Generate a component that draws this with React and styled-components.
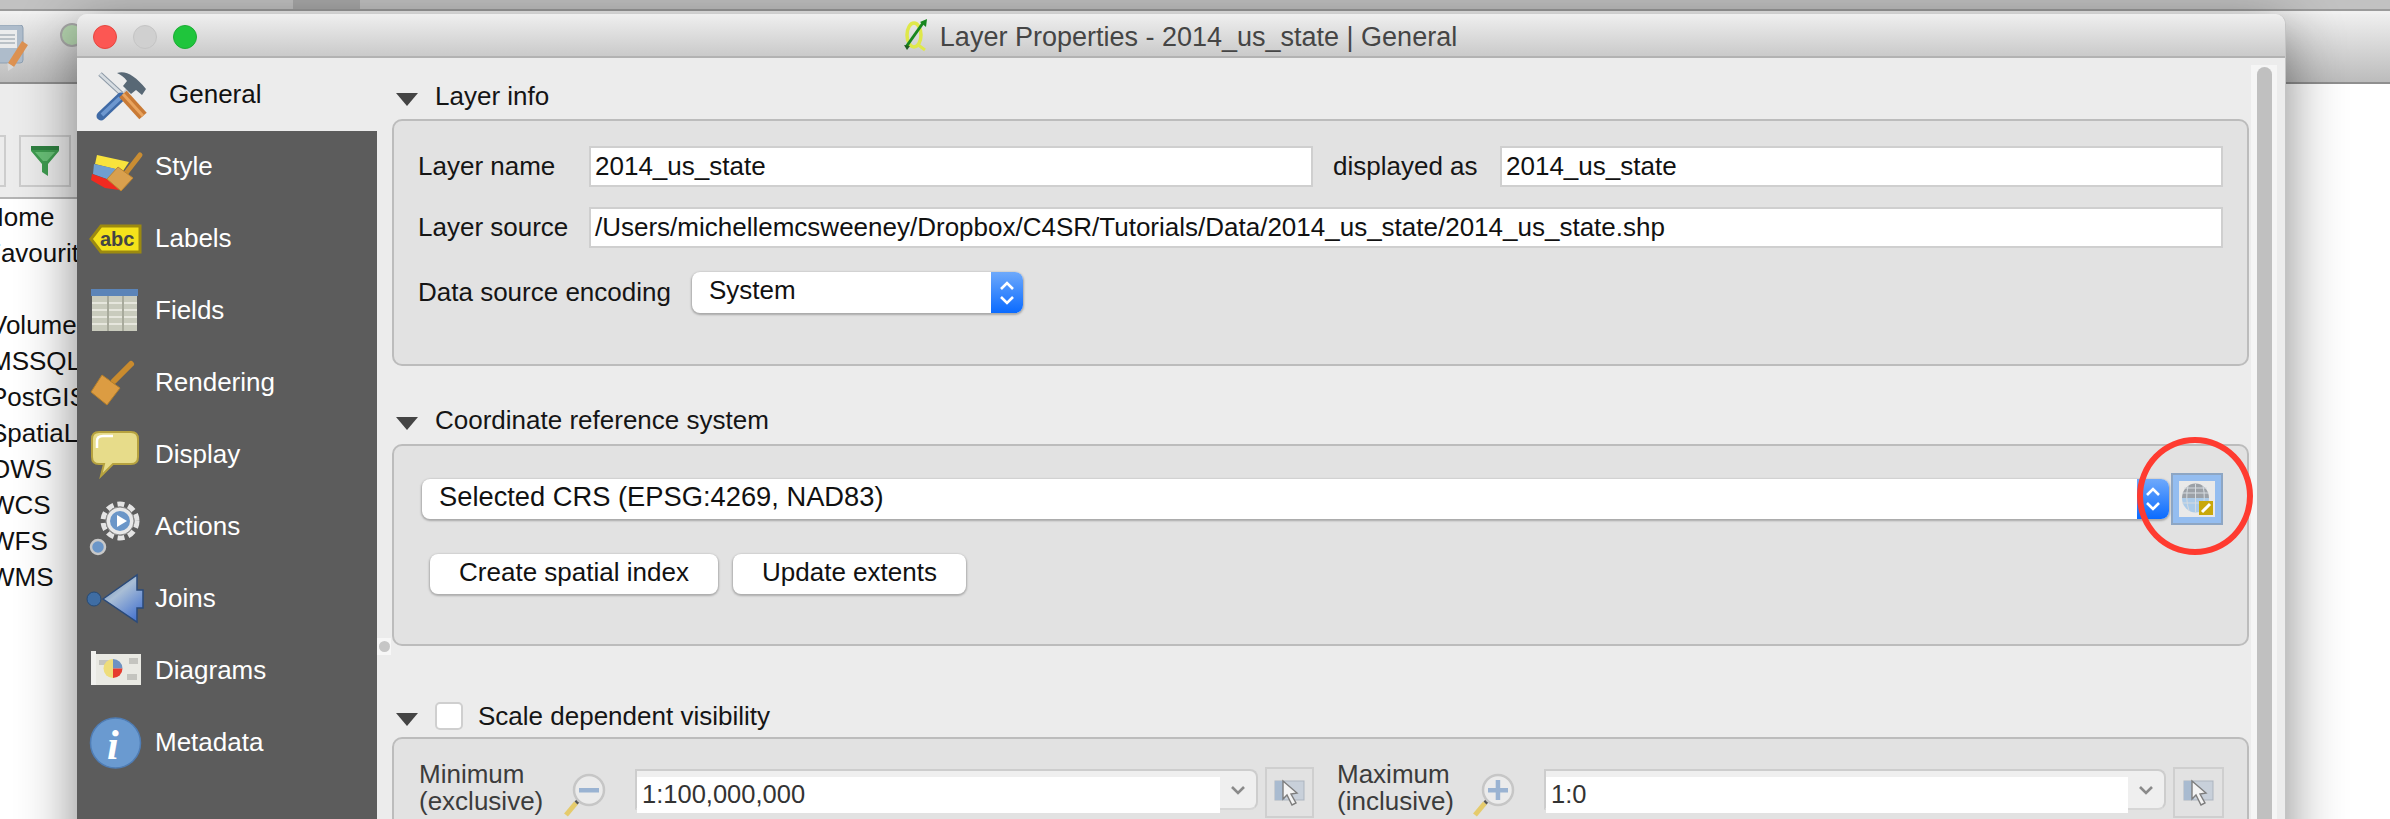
import React from "react";
import styled, { createGlobalStyle } from "styled-components";

const Global = createGlobalStyle`
  html, body { margin: 0; padding: 0; background: #fff; }
  * { box-sizing: border-box; }
  body { font-family: "Liberation Sans", Arial, sans-serif; font-size: 26px; color: #111; }
`;

const Page = styled.div`
  position: relative;
  width: 2390px;
  height: 819px;
  overflow: hidden;
  background: #fff;
`;

/* ---------- main application behind the dialog ---------- */
const TopStrip = styled.div`
  height: 11px;
  background: #c2c2c2;
  border-bottom: 2px solid #9b9b9b;
  padding-left: 293px;
`;
const TopSegment = styled.div`
  width: 67px;
  height: 9px;
  background: #a9a9a9;
`;
const WhiteGap = styled.div`
  height: 3px;
  background: #f1f1f1;
`;
const MainToolbar = styled.div`
  height: 70px;
  background: linear-gradient(#efefef, #bcbcbc);
  border-bottom: 2px solid #8f8f8f;
  display: flex;
  align-items: flex-start;
  padding-top: 9px;
  gap: 32px;
`;
const GreenDot = styled.div`
  width: 24px;
  height: 24px;
  border-radius: 50%;
  background: #b6d6b0;
  border: 2px solid #a9a9a9;
  flex: none;
`;
const BrowserPanel = styled.div`
  width: 300px;
`;
const PanelHead = styled.div`
  height: 50px;
  background: #ececec;
`;
const BrowserTools = styled.div`
  height: 65px;
  background: #ececec;
  border-bottom: 2px solid #b4b4b4;
  display: flex;
  gap: 13px;
  margin-left: -46px;
  padding-top: 1px;
`;
const ToolSquare = styled.div`
  width: 52px;
  height: 52px;
  border: 2px solid #cdcdcd;
  display: flex;
  align-items: center;
  justify-content: center;
`;
const BrowserList = styled.div`
  margin-left: -10px;
`;
const BrowserItem = styled.div`
  height: 36px;
  line-height: 36px;
  margin-left: ${(p) => (p.$far ? "-5px" : "0")};
  margin-bottom: ${(p) => (p.$spaced ? "36px" : "0")};
  color: #111;
  white-space: nowrap;
`;

/* ---------- dialog ---------- */
const Dialog = styled.div`
  position: absolute;
  left: 77px;
  top: 14px;
  width: 2209px;
  height: 860px;
  background: #ececec;
  border-radius: 10px 10px 0 0;
  box-shadow: 0 14px 58px rgba(0, 0, 0, 0.48);
  border-right: 1px solid #c4c4c4;
  display: flex;
  flex-direction: column;
`;
const TitleBar = styled.div`
  position: relative;
  height: 44px;
  flex: none;
  background: linear-gradient(#efefef, #cacaca);
  border-bottom: 2px solid #b2b2b2;
  border-radius: 10px 10px 0 0;
  display: flex;
  align-items: center;
  justify-content: center;
  gap: 12px;
  color: #454545;
  font-size: 27px;
  padding-right: 2px;
`;
const TitleText = styled.span`
  margin-top: 4px;
`;
const Lights = styled.div`
  position: absolute;
  left: 16px;
  top: 11px;
  display: flex;
  gap: 16px;
`;
const Light = styled.div`
  width: 24px;
  height: 24px;
  border-radius: 50%;
  background: ${(p) => p.$c};
  border: 1px solid ${(p) => p.$b};
`;
const DialogBody = styled.div`
  flex: 1;
  display: flex;
  min-height: 0;
`;
const Sidebar = styled.div`
  width: 300px;
  flex: none;
  display: flex;
  flex-direction: column;
`;
const SideActive = styled.div`
  height: 73px;
  flex: none;
  background: #ececec;
`;
const SideDark = styled.div`
  flex: 1;
  background: #5c5c5c;
`;
const SideItem = styled.div`
  height: ${(p) => (p.$active ? "73px" : "72px")};
  display: flex;
  align-items: center;
  padding-left: ${(p) => (p.$active ? "20px" : "10px")};
  gap: ${(p) => (p.$active ? "14px" : "10px")};
  color: ${(p) => (p.$active ? "#111" : "#fff")};
  svg { flex: none; overflow: visible; }
`;
const SideLabel = styled.span`
  margin-top: ${(p) => (p.$active ? "0" : "-2px")};
`;

/* ---------- content ---------- */
const Content = styled.div`
  position: relative;
  flex: 1;
  display: flex;
  background: #ececec;
  padding-left: 15px;
`;
const Splitter = styled.div`
  position: absolute;
  left: 0;
  top: 580px;
  width: 14px;
  height: 17px;
  background: #f7f7f7;
  display: flex;
  align-items: center;
  justify-content: center;
  &::after {
    content: "";
    width: 11px;
    height: 11px;
    border-radius: 50%;
    background: #c6c6c6;
  }
`;
const Sections = styled.div`
  width: 1857px;
  flex: none;
  padding-top: 23px;
`;
const SectionHead = styled.div`
  height: 30px;
  display: flex;
  align-items: center;
  padding-left: 4px;
  margin-top: ${(p) => p.$top || 0}px;
  margin-bottom: ${(p) => p.$bottom || 0}px;
  color: #151515;
`;
const Triangle = styled.div`
  width: 0;
  height: 0;
  flex: none;
  margin-top: 6px;
  margin-right: 17px;
  border-left: 11px solid transparent;
  border-right: 11px solid transparent;
  border-top: 13px solid #444;
`;
const Check = styled.div`
  width: 28px;
  height: 28px;
  flex: none;
  margin-right: 15px;
  background: #fff;
  border: 2px solid #cfcfcf;
  border-radius: 5px;
`;
const Group = styled.div`
  position: relative;
  height: ${(p) => p.$h}px;
  background: #e2e2e2;
  border: 2px solid #bcbcbc;
  border-radius: 10px;
`;
const InfoGrid = styled.div`
  display: grid;
  grid-template-columns: 171px 724px 187px 723px;
  grid-auto-rows: 41px;
  row-gap: 20px;
  align-items: center;
  padding: 25px 0 0 24px;
`;
const Label = styled.span`
  color: #151515;
  white-space: nowrap;
  padding-left: ${(p) => p.$pad || 0}px;
`;
const Field = styled.div`
  height: 41px;
  background: #fff;
  border: 2px solid #cfcfcf;
  padding-left: 4px;
  line-height: 37px;
  white-space: nowrap;
  grid-column: ${(p) => (p.$wide ? "2 / 5" : "auto")};
`;
const EncodingRow = styled.div`
  display: flex;
  align-items: center;
  padding: 24px 0 0 24px;
`;
const Combo = styled.div`
  height: ${(p) => p.$h || 41}px;
  width: ${(p) => p.$w}px;
  margin-left: ${(p) => p.$left || 0}px;
  flex: none;
  display: flex;
  background: #fff;
  border-radius: 8px;
  box-shadow: 0 1px 2px 1px #a9a9a9;
  overflow: hidden;
`;
const ComboText = styled.div`
  flex: 1;
  padding-left: ${(p) => p.$pad}px;
  font-size: ${(p) => p.$size || 26}px;
  line-height: ${(p) => p.$line || 37}px;
  white-space: nowrap;
`;
const Stepper = styled.div`
  width: ${(p) => p.$w}px;
  flex: none;
  background: linear-gradient(#6ea9fb, #0a6bff);
  display: flex;
  align-items: center;
  justify-content: center;
`;
const CrsRow = styled.div`
  display: flex;
  align-items: center;
  padding: 27px 0 0 28px;
  gap: 2px;
`;
const CrsButton = styled.div`
  width: 52px;
  height: 52px;
  flex: none;
  background: #94bdf0;
  border: 2px solid #8da6c4;
  display: flex;
  align-items: center;
  justify-content: center;
`;
const CrsIconFace = styled.div`
  width: 36px;
  height: 36px;
  background: #e9e9e9;
`;
const ButtonRow = styled.div`
  display: flex;
  gap: 15px;
  padding: 29px 0 0 36px;
`;
const PushButton = styled.div`
  width: ${(p) => p.$w}px;
  height: 40px;
  padding-bottom: 3px;
  background: #fff;
  border-radius: 8px;
  box-shadow: 0 1px 2px 1px #adadad;
  display: flex;
  align-items: center;
  justify-content: center;
  color: #111;
`;
const RedRing = styled.div`
  position: absolute;
  left: 1743px;
  top: -9px;
  width: 116px;
  height: 118px;
  border: 6px solid #ff3b30;
  border-radius: 50%;
`;
const ScaleRow = styled.div`
  display: flex;
  align-items: flex-start;
  padding: 28px 0 0 25px;
`;
const ScaleSide = styled.div`
  width: ${(p) => p.$w}px;
  padding-right: ${(p) => p.$right || 0}px;
  flex: none;
  display: flex;
  align-items: flex-start;
`;
const ScaleLabel = styled.div`
  width: ${(p) => p.$w}px;
  flex: none;
  line-height: 27px;
  margin-top: -6px;
  color: #3c3c3c;
`;
const MagnifierSlot = styled.div`
  width: 74px;
  flex: none;
  margin-top: 6px;
`;
const ScaleCombo = styled.div`
  flex: 1;
  height: 41px;
  margin-top: 2px;
  display: flex;
  background: #efefef;
  border: 2px solid #cdcdcd;
  border-bottom-color: #d6d6d6;
  border-radius: 0 8px 8px 0;
`;
const ScaleField = styled.div`
  flex: 1;
  height: 36px;
  margin-top: 6px;
  background: #fff;
  padding-left: 5px;
  font-size: 25.5px;
  line-height: 34px;
  color: #333;
`;
const Chevron = styled.div`
  width: 36px;
  flex: none;
  display: flex;
  align-items: center;
  justify-content: center;
`;
const MapButton = styled.div`
  width: ${(p) => p.$w}px;
  height: 51px;
  margin-left: 7px;
  flex: none;
  border: 2px solid #cfcfcf;
  display: flex;
  align-items: center;
  justify-content: center;
`;
const ScrollTrack = styled.div`
  width: 26px;
  flex: none;
  margin: 7px 0 0 2px;
  background: #f5f5f5;
  padding: 2px 5px 0 6px;
`;
const ScrollThumb = styled.div`
  height: 100%;
  background: #c0c0c0;
  border-radius: 8px 8px 0 0;
`;

/* ---------- icons ---------- */
const Ic = ({ children }) => (
  <svg width="58" height="58" viewBox="0 0 58 58">{children}</svg>
);

const GeneralIcon = () => (
  <Ic>
    <line x1="3" y1="8" x2="27" y2="30" stroke="#8b98a5" strokeWidth="5" />
    <line x1="3" y1="8" x2="27" y2="30" stroke="#d7dde2" strokeWidth="3" />
    <line x1="24" y1="32" x2="35" y2="20" stroke="#c9ced3" strokeWidth="5" />
    <line x1="4" y1="50" x2="24" y2="31" stroke="#3f6aa6" strokeWidth="9" strokeLinecap="round" />
    <line x1="5" y1="49" x2="23" y2="32" stroke="#6d97cf" strokeWidth="4" />
    <line x1="26" y1="28" x2="46" y2="50" stroke="#c97a35" strokeWidth="10" />
    <line x1="26" y1="28" x2="46" y2="50" stroke="#e9a45f" strokeWidth="3" />
    <path d="M20 7 C28 4 38 9 49 23 L45 29 L39 24 L34 28 L26 20 L30 15 C27 11 24 9 20 7Z" fill="#586875" />
  </Ic>
);
const StyleIcon = () => (
  <Ic>
    <path d="M10 17 L42 24 L36 33 L8 26Z" fill="#f8e33c" />
    <path d="M7 26 L34 32 L28 44 L6 36Z" fill="#6f9fd0" />
    <path d="M5 36 L28 44 L32 52 L18 50 L4 42Z" fill="#f02a20" />
    <line x1="39" y1="35" x2="53" y2="17" stroke="#c98d33" strokeWidth="5" strokeLinecap="round" />
    <path d="M31 29 L46 40 L34 53 L20 41Z" fill="#d9a04e" stroke="#bd8530" />
  </Ic>
);
const LabelsIcon = () => (
  <Ic>
    <path d="M4 29 L14 16 H53 V42 H14Z" fill="#f4e21b" stroke="#9c8a10" strokeWidth="3" />
    <text x="13" y="36" fontFamily="Liberation Sans" fontWeight="700" fontSize="20" fill="#444">abc</text>
  </Ic>
);
const FieldsIcon = () => (
  <Ic>
    <rect x="5" y="14" width="45" height="35" fill="#c9cbbd" />
    <rect x="4" y="7" width="47" height="7" fill="#5b84b8" />
    <rect x="5" y="20" width="45" height="2" fill="#e6e6dd" />
    <rect x="5" y="27" width="45" height="2" fill="#e6e6dd" />
    <rect x="5" y="34" width="45" height="2" fill="#e6e6dd" />
    <rect x="5" y="41" width="45" height="2" fill="#e6e6dd" />
    <rect x="20" y="14" width="2" height="35" fill="#a8aa9c" />
    <rect x="35" y="14" width="2" height="35" fill="#a8aa9c" />
  </Ic>
);
const RenderingIcon = () => (
  <Ic>
    <line x1="27" y1="27" x2="44" y2="10" stroke="#c98b2e" strokeWidth="6" strokeLinecap="round" />
    <path d="M15 21 L33 34 L20 51 L4 38Z" fill="#dc9c42" stroke="#b57f2a" />
  </Ic>
);
const DisplayIcon = () => (
  <Ic>
    <path d="M12 6 H44 Q51 6 51 13 V31 Q51 38 44 38 H26 L14 50 L17 38 H12 Q5 38 5 31 V13 Q5 6 12 6Z" fill="#e7dc8a" stroke="#b6a23f" strokeWidth="2" />
    <path d="M10 22 V15 Q10 10 16 10 H26" fill="none" stroke="#fff" strokeWidth="2.5" />
  </Ic>
);
const ActionsIcon = () => (
  <Ic>
    <circle cx="33" cy="23" r="17" fill="none" stroke="#e4e4e4" strokeWidth="5" strokeDasharray="7 4" />
    <circle cx="33" cy="23" r="14" fill="#e8e8e8" stroke="#8a8a8a" strokeWidth="1" />
    <circle cx="33" cy="23" r="10" fill="#6b96c8" />
    <path d="M30 17 L40 23 L30 29Z" fill="#fff" />
    <circle cx="11" cy="49" r="7" fill="#6b96c8" stroke="#c8c8c8" strokeWidth="2.5" />
  </Ic>
);
const JoinsIcon = () => (
  <Ic>
    <defs>
      <linearGradient id="jg" x1="0" y1="0" x2="0.7" y2="1">
        <stop offset="0" stopColor="#5b7ea8" />
        <stop offset="0.45" stopColor="#a9bed6" />
        <stop offset="1" stopColor="#4c78d0" />
      </linearGradient>
    </defs>
    <circle cx="7" cy="29" r="7" fill="#3f6da3" stroke="#264a75" />
    <path d="M16 29 L50 5 L50 20 L56 20 L56 38 L50 38 L50 52Z" fill="url(#jg)" stroke="#2a4a7a" strokeWidth="1.5" />
  </Ic>
);
const DiagramsIcon = () => (
  <Ic>
    <rect x="8" y="12" width="46" height="31" fill="#e9e9e3" />
    <rect x="4" y="9" width="5" height="34" fill="#f1f1ee" />
    <path d="M12 18 h10 v5 h-10z M42 16 h9 v6 h-9z M40 32 h10 v6 h-10z" fill="#c4c4bf" />
    <path d="M26 17 A9.5 9.5 0 0 0 26 36Z" fill="#eedd7a" />
    <path d="M26 17 A9.5 9.5 0 0 1 35.5 26.5 L26 26.5Z" fill="#6d92c2" />
    <path d="M26 26.5 H35.5 A9.5 9.5 0 0 1 26 36Z" fill="#e63c2e" />
  </Ic>
);
const MetadataIcon = () => (
  <Ic>
    <circle cx="28.5" cy="29" r="25" fill="#6a9ad0" stroke="#4f7db5" strokeWidth="1.5" />
    <text x="20" y="45" fontFamily="Liberation Serif" fontStyle="italic" fontWeight="700" fontSize="42" fill="#fff">i</text>
  </Ic>
);

const Qgis = () => (
  <svg width="25" height="34" viewBox="0 0 25 34">
    <ellipse cx="11" cy="17" rx="7" ry="12" fill="none" stroke="#dfe84a" strokeWidth="3.5" />
    <path d="M14 26 L22 32" stroke="#dfe84a" strokeWidth="3" />
    <path d="M3 29 L20 5" stroke="#18871f" strokeWidth="3" />
    <path d="M17 4 L24 1 L23 9Z" fill="#18871f" />
    <path d="M1 27 L7 28 L4 32Z" fill="#1d5c22" />
  </svg>
);
const Updown = ({ s = 1 }) => (
  <svg width={20 * s} height={30 * s} viewBox="0 0 20 30" fill="none" stroke="#fff" strokeWidth="2.6">
    <path d="M4 11 L10 5 L16 11" />
    <path d="M4 19 L10 25 L16 19" />
  </svg>
);
const CrsGlobe = () => (
  <svg width="36" height="36" viewBox="0 0 36 36">
    <path d="M3 17 A13 14 0 0 1 30 17Z" fill="#9ca1a7" />
    <path d="M3 17 A13 14 0 0 0 30 17Z" fill="#abcbe9" />
    <path d="M3 12 H30 M5 7 H28 M3 22 H30 M16.5 3 V31 M9 5 Q6 17 10 30 M24 5 Q27 17 23 30" fill="none" stroke="#d6dbe0" strokeWidth="1" />
    <rect x="20" y="20" width="14" height="14" fill="#c9a80b" />
    <path d="M23 31 L31 23" stroke="#fff" strokeWidth="3" />
  </svg>
);
const Magnifier = ({ plus }) => (
  <svg width="45" height="45" viewBox="0 0 45 45" style={{ display: "block" }}>
    <line x1="5" y1="42" x2="15" y2="30" stroke="#e5cb6c" strokeWidth="5" />
    <line x1="15" y1="30" x2="19" y2="26" stroke="#555" strokeWidth="4" />
    <circle cx="28" cy="17" r="15" fill="#ebebeb" stroke="#c6c6c6" strokeWidth="2.5" />
    <rect x="18" y="15" width="20" height="4.5" fill="#9ab3d2" />
    {plus && <rect x="25.7" y="7" width="4.5" height="20" fill="#9ab3d2" />}
  </svg>
);
const MapCursor = () => (
  <svg width="32" height="30" viewBox="0 0 32 30">
    <rect x="1" y="3" width="29" height="19" fill="#c8d0da" stroke="#adb5bf" />
    <rect x="1" y="3" width="10" height="19" fill="#a9bbd0" />
    <path d="M9 3 L9 21 L13 17 L18 27 L22 25 L17 16 L23 15Z" fill="#f4f4f4" stroke="#7d7d7d" strokeWidth="1.4" />
  </svg>
);
const Down = () => (
  <svg width="16" height="10" viewBox="0 0 16 10" fill="none" stroke="#8a8a8a" strokeWidth="2.6">
    <path d="M2 2 L8 8 L14 2" />
  </svg>
);
const SaveEdit = () => (
  <svg width="28" height="46" viewBox="0 0 28 46" style={{ flex: "none", marginTop: 2 }}>
    <rect x="-16" y="0" width="39" height="38" rx="3" fill="#aebccb" stroke="#8ea0b2" />
    <rect x="-12" y="5" width="29" height="18" fill="#ebeced" />
    <path d="M-12 10 H15 M-12 14 H15 M-12 18 H15" stroke="#aab3bb" strokeWidth="1.5" />
    <line x1="25" y1="18" x2="11" y2="40" stroke="#dd9252" strokeWidth="7" />
    <path d="M7.5 38 L14 42 L8 46Z" fill="#d8d8d8" />
  </svg>
);
const Funnel = () => (
  <svg width="30" height="32" viewBox="0 0 30 32">
    <path d="M1 1 H29 V6 L18 19 V31 L12 27 V19 L1 6Z" fill="#3f9c50" />
    <path d="M1 1 H29 V5 H1Z" fill="#2f8041" />
    <path d="M5 7 H25 L17 16 H13Z" fill="#69c077" />
  </svg>
);

const NAV = [
  ["Style", StyleIcon],
  ["Labels", LabelsIcon],
  ["Fields", FieldsIcon],
  ["Rendering", RenderingIcon],
  ["Display", DisplayIcon],
  ["Actions", ActionsIcon],
  ["Joins", JoinsIcon],
  ["Diagrams", DiagramsIcon],
  ["Metadata", MetadataIcon],
];
const BROWSER = ["Home", "Favourites", "Volumes", "MSSQL", "PostGIS", "SpatiaLite", "OWS", "WCS", "WFS", "WMS"];

export default function App() {
  return (
    <Page>
      <Global />
      <TopStrip><TopSegment /></TopStrip>
      <WhiteGap />
      <MainToolbar>
        <SaveEdit />
        <GreenDot />
      </MainToolbar>
      <BrowserPanel>
        <PanelHead />
        <BrowserTools>
          <ToolSquare />
          <ToolSquare><Funnel /></ToolSquare>
        </BrowserTools>
        <BrowserList>
          {BROWSER.map((b) => (
            <BrowserItem
              key={b}
              $far={b === "Home" || b === "Favourites"}
              $spaced={b === "Favourites"}
            >
              {b}
            </BrowserItem>
          ))}
        </BrowserList>
      </BrowserPanel>

      <Dialog>
        <TitleBar>
          <Lights>
            <Light $c="#fc5753" $b="#e5463f" />
            <Light $c="#d0d0d0" $b="#c4c4c4" />
            <Light $c="#1fc53c" $b="#1cad34" />
          </Lights>
          <Qgis />
          <TitleText>Layer Properties - 2014_us_state | General</TitleText>
        </TitleBar>
        <DialogBody>
          <Sidebar>
            <SideActive>
              <SideItem $active><GeneralIcon /><SideLabel $active>General</SideLabel></SideItem>
            </SideActive>
            <SideDark>
              {NAV.map(([name, Icon]) => (
                <SideItem key={name}><Icon /><SideLabel>{name}</SideLabel></SideItem>
              ))}
            </SideDark>
          </Sidebar>
          <Content>
            <Splitter />
            <Sections>
              <SectionHead $bottom={8}><Triangle />Layer info</SectionHead>
              <Group $h={247}>
                <InfoGrid>
                  <Label>Layer name</Label>
                  <Field>2014_us_state</Field>
                  <Label $pad={20}>displayed as</Label>
                  <Field>2014_us_state</Field>
                  <Label>Layer source</Label>
                  <Field $wide>/Users/michellemcsweeney/Dropbox/C4SR/Tutorials/Data/2014_us_state/2014_us_state.shp</Field>
                </InfoGrid>
                <EncodingRow>
                  <Label>Data source encoding</Label>
                  <Combo $w={331} $left={21}>
                    <ComboText $pad={17}>System</ComboText>
                    <Stepper $w={32}><Updown /></Stepper>
                  </Combo>
                </EncodingRow>
              </Group>

              <SectionHead $top={39} $bottom={9}><Triangle />Coordinate reference system</SectionHead>
              <Group $h={202}>
                <CrsRow>
                  <Combo $w={1747} $h={40}>
                    <ComboText $pad={17} $size={27.3} $line={35}>Selected CRS (EPSG:4269, NAD83)</ComboText>
                    <Stepper $w={32}><Updown /></Stepper>
                  </Combo>
                  <CrsButton>
                    <CrsIconFace><CrsGlobe /></CrsIconFace>
                  </CrsButton>
                </CrsRow>
                <ButtonRow>
                  <PushButton $w={288}>Create spatial index</PushButton>
                  <PushButton $w={233}>Update extents</PushButton>
                </ButtonRow>
                <RedRing />
              </Group>

              <SectionHead $top={55} $bottom={6}><Triangle /><Check />Scale dependent visibility</SectionHead>
              <Group $h={120}>
                <ScaleRow>
                  <ScaleSide $w={918} $right={23}>
                    <ScaleLabel $w={142}>Minimum<br />(exclusive)</ScaleLabel>
                    <MagnifierSlot><Magnifier /></MagnifierSlot>
                    <ScaleCombo>
                      <ScaleField>1:100,000,000</ScaleField>
                      <Chevron><Down /></Chevron>
                    </ScaleCombo>
                    <MapButton $w={49}><MapCursor /></MapButton>
                  </ScaleSide>
                  <ScaleSide $w={887}>
                    <ScaleLabel $w={133}>Maximum<br />(inclusive)</ScaleLabel>
                    <MagnifierSlot><Magnifier plus /></MagnifierSlot>
                    <ScaleCombo>
                      <ScaleField>1:0</ScaleField>
                      <Chevron><Down /></Chevron>
                    </ScaleCombo>
                    <MapButton $w={51}><MapCursor /></MapButton>
                  </ScaleSide>
                </ScaleRow>
              </Group>
            </Sections>
            <ScrollTrack><ScrollThumb /></ScrollTrack>
          </Content>
        </DialogBody>
      </Dialog>
    </Page>
  );
}
